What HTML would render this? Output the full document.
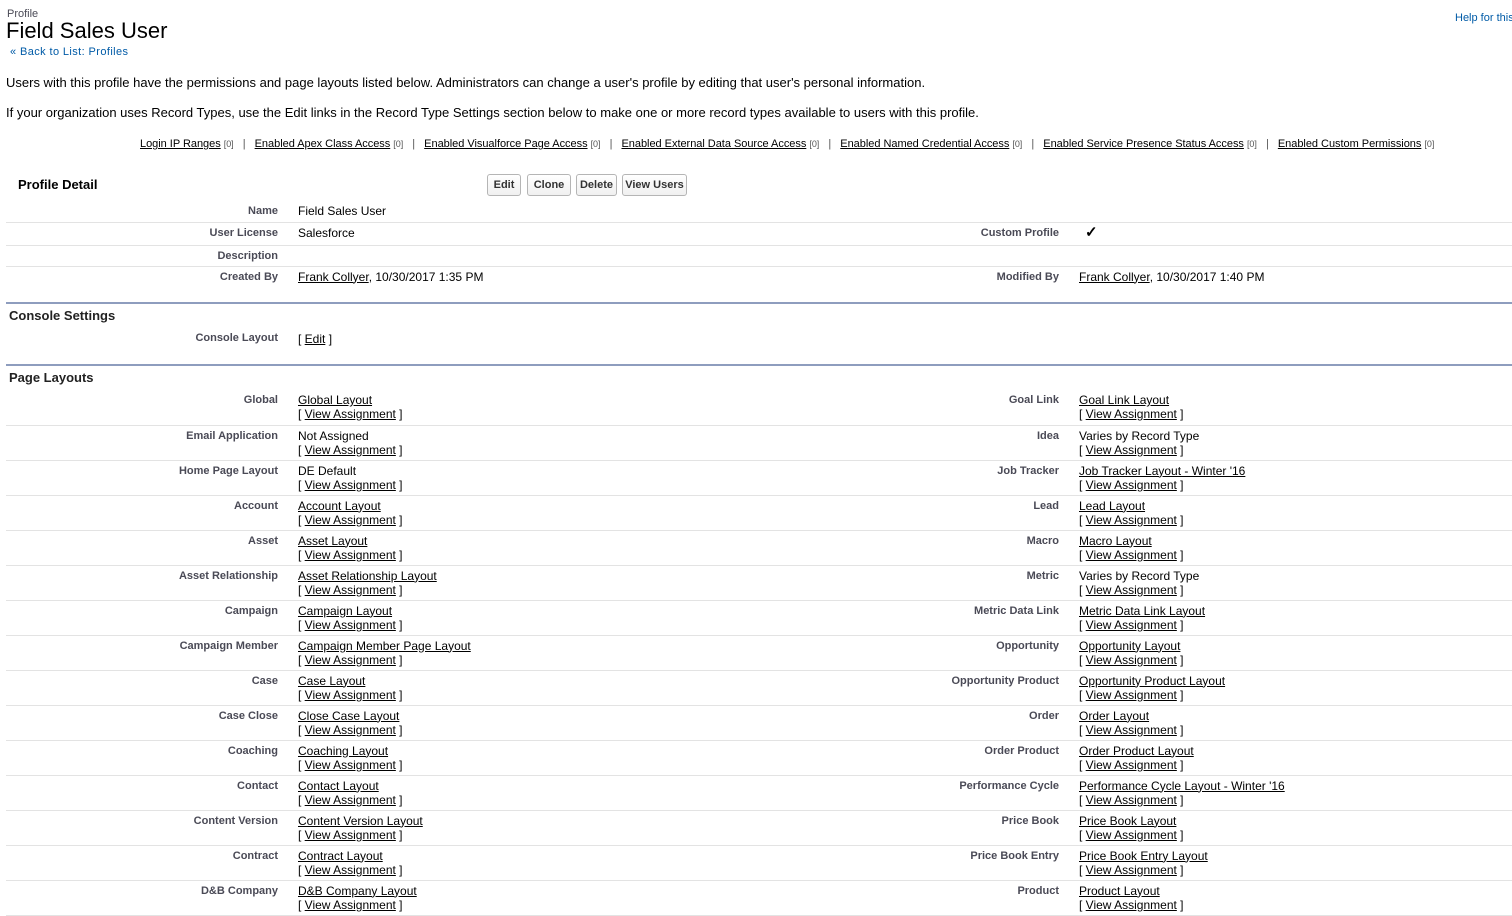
<!DOCTYPE html>
<html><head><meta charset="utf-8"><style>
body{margin:0;background:#fff;font-family:"Liberation Sans",Arial,sans-serif;color:#000;width:1512px;height:893px;overflow:hidden;position:relative}
.a{position:absolute;white-space:nowrap}
a{color:#000;text-decoration:underline}
.lab{font-size:11px;font-weight:bold;color:#4a4a56;text-align:right}
.val{font-size:12px}
table{border-collapse:collapse;table-layout:fixed;position:absolute;left:6px;width:1506px}
td{vertical-align:top;padding:0;font-size:12px}
td.l{font-size:11px;font-weight:bold;color:#4a4a56;text-align:right;padding-right:10px;padding-top:4px}
td.v{padding-left:10px;padding-top:3px;line-height:14px}
tr.r td{border-bottom:1px solid #e3e3e3;height:35px;box-sizing:border-box}
.btn{position:absolute;top:174px;height:22px;box-sizing:border-box;border:1px solid #b5b5b5;border-radius:3px;background:linear-gradient(#fff,#f0f0f0);font-size:11px;font-weight:bold;color:#333;line-height:20px;text-align:center}
.hl{position:absolute;left:6px;width:1506px;height:2px;background:#8e9dbe}
.sec{position:absolute;left:9px;font-size:13px;font-weight:bold;color:#222}
.rl a{font-size:11px;color:#000}
.rl span{font-size:9px}
</style></head><body>
<div class="a" style="left:7px;top:8px;font-size:11px;color:#4a4a56">Profile</div>
<div class="a" style="left:6px;top:18px;font-size:22px;color:#000">Field Sales User</div>
<div class="a" style="left:10px;top:46px;font-size:11px;color:#015ba7;letter-spacing:0.4px">« Back to List: Profiles</div>
<div class="a" style="left:1455px;top:12px;font-size:11px;color:#015ba7">Help for this</div>
<div class="a" style="left:6px;top:75px;font-size:13px">Users with this profile have the permissions and page layouts listed below. Administrators can change a user's profile by editing that user's personal information.</div>
<div class="a" style="left:6px;top:105px;font-size:13px">If your organization uses Record Types, use the Edit links in the Record Type Settings section below to make one or more record types available to users with this profile.</div>
<div class="a rl" style="left:140px;top:138px;font-size:11px;color:#555;letter-spacing:-0.03px"><a>Login IP Ranges</a> <span>[0]</span> &nbsp; | &nbsp; <a>Enabled Apex Class Access</a> <span>[0]</span> &nbsp; | &nbsp; <a>Enabled Visualforce Page Access</a> <span>[0]</span> &nbsp; | &nbsp; <a>Enabled External Data Source Access</a> <span>[0]</span> &nbsp; | &nbsp; <a>Enabled Named Credential Access</a> <span>[0]</span> &nbsp; | &nbsp; <a>Enabled Service Presence Status Access</a> <span>[0]</span> &nbsp; | &nbsp; <a>Enabled Custom Permissions</a> <span>[0]</span></div>
<div class="a" style="left:18px;top:177px;font-size:13px;font-weight:bold">Profile Detail</div>
<div class="btn" style="left:487px;width:34px">Edit</div>
<div class="btn" style="left:527px;width:44px">Clone</div>
<div class="btn" style="left:576px;width:41px">Delete</div>
<div class="btn" style="left:622px;width:65px">View Users</div>

<table style="top:201px">
<colgroup><col style="width:282px"><col style="width:592px"><col style="width:189px"><col style="width:443px"></colgroup>
<tr style="height:21px"><td class="l">Name</td><td class="v">Field Sales User</td><td></td><td></td></tr>
<tr style="height:23px;border-top:1px solid #e3e3e3"><td class="l">User License</td><td class="v">Salesforce</td><td class="l">Custom Profile</td><td class="v" style="font-size:15px;line-height:14px;padding-left:16px;font-weight:bold">✓</td></tr>
<tr style="height:21px;border-top:1px solid #e3e3e3"><td class="l">Description</td><td></td><td></td><td></td></tr>
<tr style="height:24px;border-top:1px solid #e3e3e3"><td class="l">Created By</td><td class="v"><a>Frank Collyer</a>, 10/30/2017 1:35 PM</td><td class="l">Modified By</td><td class="v"><a>Frank Collyer</a>, 10/30/2017 1:40 PM</td></tr>
</table>

<div class="hl" style="top:302px"></div>
<div class="sec" style="top:308px">Console Settings</div>
<div class="a lab" style="left:0;width:278px;top:332px">Console Layout</div>
<div class="a val" style="left:298px;top:332px">[ <a>Edit</a> ]</div>
<div class="hl" style="top:364px"></div>
<div class="sec" style="top:370px">Page Layouts</div>

<table style="top:390px">
<colgroup><col style="width:282px"><col style="width:592px"><col style="width:189px"><col style="width:443px"></colgroup>
<tr class="r"><td class="l">Global</td><td class="v"><a>Global Layout</a><br>[ <a>View Assignment</a> ]</td><td class="l">Goal Link</td><td class="v"><a>Goal Link Layout</a><br>[ <a>View Assignment</a> ]</td></tr>
<tr class="r"><td class="l">Email Application</td><td class="v">Not Assigned<br>[ <a>View Assignment</a> ]</td><td class="l">Idea</td><td class="v">Varies by Record Type<br>[ <a>View Assignment</a> ]</td></tr>
<tr class="r"><td class="l">Home Page Layout</td><td class="v">DE Default<br>[ <a>View Assignment</a> ]</td><td class="l">Job Tracker</td><td class="v"><a>Job Tracker Layout - Winter '16</a><br>[ <a>View Assignment</a> ]</td></tr>
<tr class="r"><td class="l">Account</td><td class="v"><a>Account Layout</a><br>[ <a>View Assignment</a> ]</td><td class="l">Lead</td><td class="v"><a>Lead Layout</a><br>[ <a>View Assignment</a> ]</td></tr>
<tr class="r"><td class="l">Asset</td><td class="v"><a>Asset Layout</a><br>[ <a>View Assignment</a> ]</td><td class="l">Macro</td><td class="v"><a>Macro Layout</a><br>[ <a>View Assignment</a> ]</td></tr>
<tr class="r"><td class="l">Asset Relationship</td><td class="v"><a>Asset Relationship Layout</a><br>[ <a>View Assignment</a> ]</td><td class="l">Metric</td><td class="v">Varies by Record Type<br>[ <a>View Assignment</a> ]</td></tr>
<tr class="r"><td class="l">Campaign</td><td class="v"><a>Campaign Layout</a><br>[ <a>View Assignment</a> ]</td><td class="l">Metric Data Link</td><td class="v"><a>Metric Data Link Layout</a><br>[ <a>View Assignment</a> ]</td></tr>
<tr class="r"><td class="l">Campaign Member</td><td class="v"><a>Campaign Member Page Layout</a><br>[ <a>View Assignment</a> ]</td><td class="l">Opportunity</td><td class="v"><a>Opportunity Layout</a><br>[ <a>View Assignment</a> ]</td></tr>
<tr class="r"><td class="l">Case</td><td class="v"><a>Case Layout</a><br>[ <a>View Assignment</a> ]</td><td class="l">Opportunity Product</td><td class="v"><a>Opportunity Product Layout</a><br>[ <a>View Assignment</a> ]</td></tr>
<tr class="r"><td class="l">Case Close</td><td class="v"><a>Close Case Layout</a><br>[ <a>View Assignment</a> ]</td><td class="l">Order</td><td class="v"><a>Order Layout</a><br>[ <a>View Assignment</a> ]</td></tr>
<tr class="r"><td class="l">Coaching</td><td class="v"><a>Coaching Layout</a><br>[ <a>View Assignment</a> ]</td><td class="l">Order Product</td><td class="v"><a>Order Product Layout</a><br>[ <a>View Assignment</a> ]</td></tr>
<tr class="r"><td class="l">Contact</td><td class="v"><a>Contact Layout</a><br>[ <a>View Assignment</a> ]</td><td class="l">Performance Cycle</td><td class="v"><a>Performance Cycle Layout - Winter '16</a><br>[ <a>View Assignment</a> ]</td></tr>
<tr class="r"><td class="l">Content Version</td><td class="v"><a>Content Version Layout</a><br>[ <a>View Assignment</a> ]</td><td class="l">Price Book</td><td class="v"><a>Price Book Layout</a><br>[ <a>View Assignment</a> ]</td></tr>
<tr class="r"><td class="l">Contract</td><td class="v"><a>Contract Layout</a><br>[ <a>View Assignment</a> ]</td><td class="l">Price Book Entry</td><td class="v"><a>Price Book Entry Layout</a><br>[ <a>View Assignment</a> ]</td></tr>
<tr class="r"><td class="l">D&amp;B Company</td><td class="v"><a>D&amp;B Company Layout</a><br>[ <a>View Assignment</a> ]</td><td class="l">Product</td><td class="v"><a>Product Layout</a><br>[ <a>View Assignment</a> ]</td></tr>
</table>
</body></html>
